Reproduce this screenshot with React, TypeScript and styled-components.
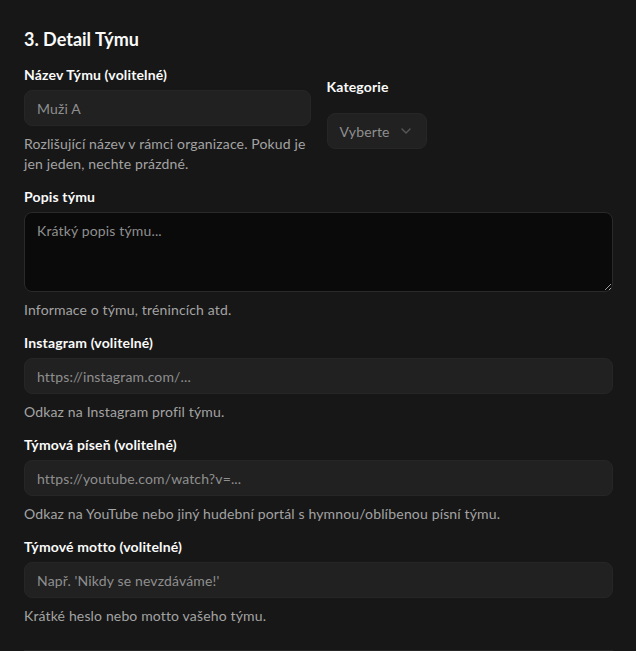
import styled, { createGlobalStyle } from 'styled-components'

const Global = createGlobalStyle`
    html, body {
        margin: 0;
        padding: 0;
        background: #171717;
    }
    body {
        font-family: Lato, "Noto Sans", sans-serif;
        color: #fafafa;
        letter-spacing: 0.15px;
    }
`

const Section = styled.section`
    box-sizing: border-box;
    width: 636px;
    height: 651px;
    padding: 25px 23px 0 24px;
    display: flex;
    flex-direction: column;
    overflow: hidden;
`

const Title = styled.h2`
    margin: 0 0 15px;
    font-size: 18px;
    line-height: 28px;
    font-weight: 700;
    letter-spacing: 0;
`

const Fields = styled.div`
    display: flex;
    flex-direction: column;
    gap: 16px;
`

const Row = styled.div`
    display: grid;
    grid-template-columns: 1fr 1fr;
    gap: 16px;
`

const Field = styled.div<{ $offset?: number; $gap?: number }>`
    display: flex;
    flex-direction: column;
    align-items: flex-start;
    gap: ${p => p.$gap ?? 8}px;
    padding-top: ${p => p.$offset ?? 0}px;
`

const Label = styled.label`
    font-size: 14px;
    line-height: 14px;
    font-weight: 700;
    color: #fafafa;
`

const Input = styled.input`
    box-sizing: border-box;
    width: 100%;
    height: 36px;
    padding: 0 12px;
    border-radius: 8px;
    border: 1px solid #262626;
    background: #212121;
    color: #fafafa;
    font: inherit;
    font-size: 14px;
    letter-spacing: 0.15px;
    outline: none;
    &::placeholder {
        color: #8f8f8f;
    }
`

const TextArea = styled.textarea`
    box-sizing: border-box;
    width: 100%;
    height: 80px;
    padding: 8px 12px;
    border-radius: 8px;
    border: 1px solid #2a2a2a;
    background: #0a0a0a;
    color: #fafafa;
    font: inherit;
    font-size: 14px;
    line-height: 20px;
    letter-spacing: 0.15px;
    outline: none;
    &::placeholder {
        color: #8f8f8f;
    }
`

const Select = styled.button`
    box-sizing: border-box;
    height: 36px;
    padding: 0 12px;
    display: flex;
    align-items: center;
    gap: 8px;
    border-radius: 8px;
    border: 1px solid #262626;
    background: #212121;
    color: #8f8f8f;
    font: inherit;
    font-size: 14px;
    letter-spacing: 0.15px;
    svg {
        opacity: 0.5;
    }
`

const Help = styled.p`
    margin: 0;
    font-size: 14px;
    line-height: 20px;
    color: #a3a3a3;
`

const Divider = styled.div`
    margin-top: auto;
    height: 1px;
    background: #262626;
`

const Chevron = () => (
    <svg width="16" height="16" viewBox="0 0 24 24" fill="none" stroke="currentColor" strokeWidth="2" strokeLinecap="round" strokeLinejoin="round">
        <path d="m6 9 6 6 6-6" />
    </svg>
)

const links = [
    { label: 'Instagram (volitelné)', placeholder: 'https://instagram.com/...', help: 'Odkaz na Instagram profil týmu.' },
    { label: 'Týmová píseň (volitelné)', placeholder: 'https://youtube.com/watch?v=...', help: 'Odkaz na YouTube nebo jiný hudební portál s hymnou/oblíbenou písní týmu.' },
    { label: 'Týmové motto (volitelné)', placeholder: "Např. 'Nikdy se nevzdáváme!'", help: 'Krátké heslo nebo motto vašeho týmu.' },
]

export default function App() {
    return (
        <Section>
            <Global />
            <Title>3. Detail Týmu</Title>
            <Fields>
                <Row>
                    <Field>
                        <Label>Název Týmu (volitelné)</Label>
                        <Input placeholder="Muži A" />
                        <Help>Rozlišující název v rámci organizace. Pokud je jen jeden, nechte prázdné.</Help>
                    </Field>
                    <Field $offset={12} $gap={19}>
                        <Label>Kategorie</Label>
                        <Select>
                            Vyberte
                            <Chevron />
                        </Select>
                    </Field>
                </Row>
                <Field>
                    <Label>Popis týmu</Label>
                    <TextArea placeholder="Krátký popis týmu..." />
                    <Help>Informace o týmu, trénincích atd.</Help>
                </Field>
                {links.map(l => (
                    <Field key={l.label}>
                        <Label>{l.label}</Label>
                        <Input placeholder={l.placeholder} />
                        <Help>{l.help}</Help>
                    </Field>
                ))}
            </Fields>
            <Divider />
        </Section>
    )
}
